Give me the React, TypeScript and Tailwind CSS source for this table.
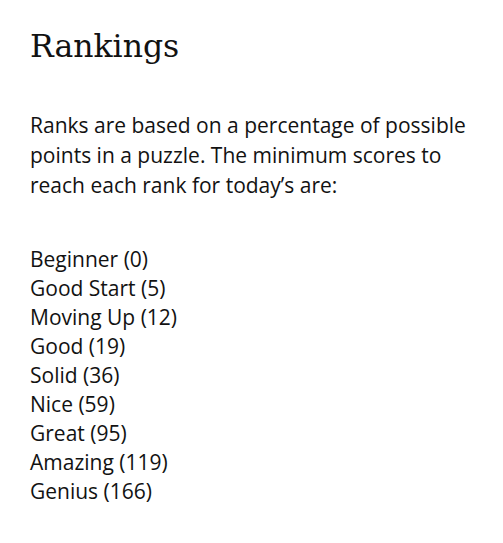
export default function App() {
  const ranks = [
    "Beginner (0)",
    "Good Start (5)",
    "Moving Up (12)",
    "Good (19)",
    "Solid (36)",
    "Nice (59)",
    "Great (95)",
    "Amazing (119)",
    "Genius (166)",
  ];
  return (
    <div className="min-h-[543px] bg-white px-[30px] pt-[26px] text-[#121212]">
      <h1 className="text-[31.5px] leading-[40px] font-normal" style={{ fontFamily: '"DejaVu Serif", serif' }}>
        Rankings
      </h1>
      <div className="text-[21px]" style={{ fontFamily: '"Open Sans", sans-serif' }}>
        <p className="mt-[44px] leading-[30px]">
          Ranks are based on a percentage of possible points in a puzzle. The minimum scores to reach each rank for
          today’s are:
        </p>
        <ul className="mt-[45px] leading-[29px]">
          {ranks.map((r) => (
            <li key={r}>{r}</li>
          ))}
        </ul>
      </div>
    </div>
  );
}
